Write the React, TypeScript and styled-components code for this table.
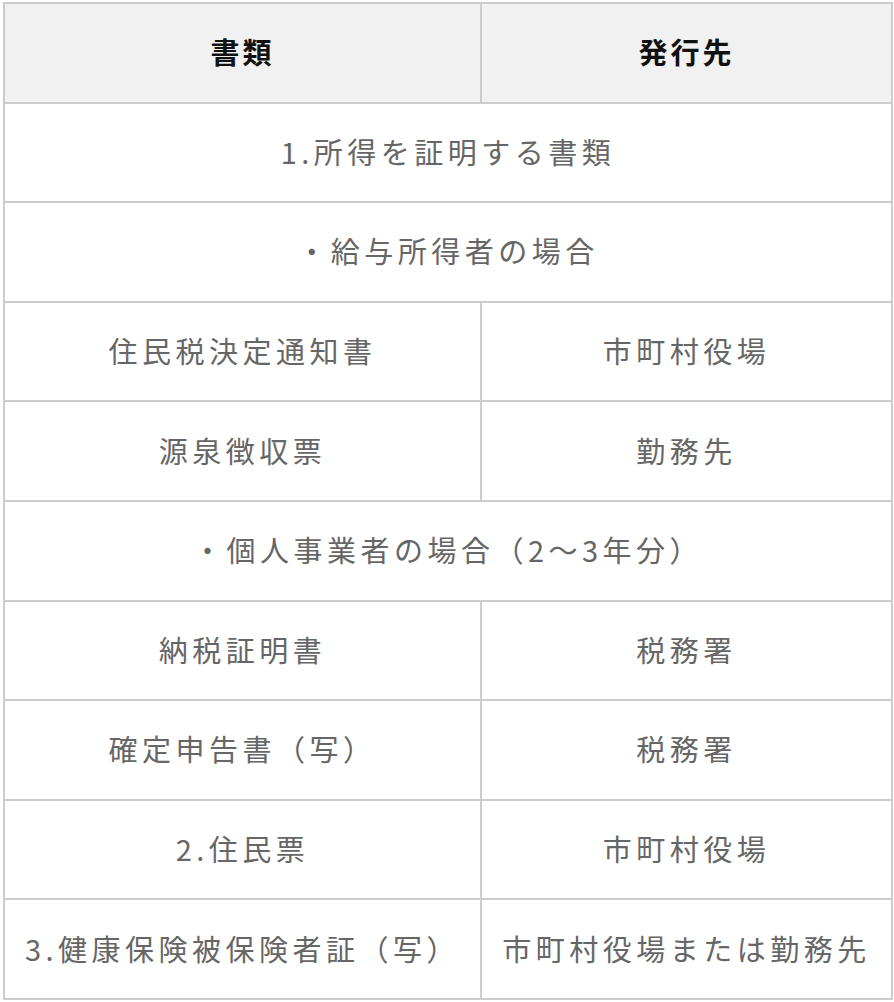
import React from 'react';
import styled, {createGlobalStyle} from 'styled-components';

const GlobalStyle = createGlobalStyle`
  html, body {
    margin: 0;
    padding: 0;
    background: #fff;
  }
  body {
    font-family: "Noto Sans CJK JP", "Noto Sans", sans-serif;
  }
`

type Row =
    | {kind: 'section', text: string}
    | {kind: 'pair', doc: string, issuer: string}

const rows: Row[] = [
    {kind: 'section', text: '1.所得を証明する書類'},
    {kind: 'section', text: '・給与所得者の場合'},
    {kind: 'pair', doc: '住民税決定通知書', issuer: '市町村役場'},
    {kind: 'pair', doc: '源泉徴収票', issuer: '勤務先'},
    {kind: 'section', text: '・個人事業者の場合（2～3年分）'},
    {kind: 'pair', doc: '納税証明書', issuer: '税務署'},
    {kind: 'pair', doc: '確定申告書（写）', issuer: '税務署'},
    {kind: 'pair', doc: '2.住民票', issuer: '市町村役場'},
    {kind: 'pair', doc: '3.健康保険被保険者証（写）', issuer: '市町村役場または勤務先'},
];

const DocumentsTable: React.FC = () => {
    return (
        <Wrapper>
            <Table>
                <colgroup>
                    <col style={{width: 477}}/>
                    <col style={{width: 411}}/>
                </colgroup>
                <thead>
                <tr>
                    <HeadCell>書類</HeadCell>
                    <HeadCell>発行先</HeadCell>
                </tr>
                </thead>
                <tbody>
                {rows.map((row, i) => row.kind === 'section' ? (
                    <tr key={i}>
                        <Cell colSpan={2}>{row.text}</Cell>
                    </tr>
                ) : (
                    <tr key={i}>
                        <Cell>{row.doc}</Cell>
                        <Cell>{row.issuer}</Cell>
                    </tr>
                ))}
                </tbody>
            </Table>
        </Wrapper>
    )
};

const Wrapper = styled.div`
  padding: 2px 0 0 3px;
`

const Table = styled.table`
  width: 888px;
  table-layout: fixed;
  border-collapse: collapse;
  border: 2px solid #cccccc;
`

const HeadCell = styled.th`
  height: 94.6px;
  padding: 0 0 3px;
  border: 2px solid #cccccc;
  background: #f1f1f1;
  color: #111;
  font-size: 29px;
  font-weight: 700;
  letter-spacing: 3px;
  text-align: center;
  vertical-align: middle;
`

const Cell = styled.td`
  height: 94.6px;
  padding: 0 0 3px;
  border: 2px solid #cccccc;
  color: #666;
  font-size: 29px;
  font-weight: 400;
  letter-spacing: 4.5px;
  text-align: center;
  vertical-align: middle;
  white-space: nowrap;
`

export default function App() {
    return (
        <>
            <GlobalStyle/>
            <DocumentsTable/>
        </>
    )
}
